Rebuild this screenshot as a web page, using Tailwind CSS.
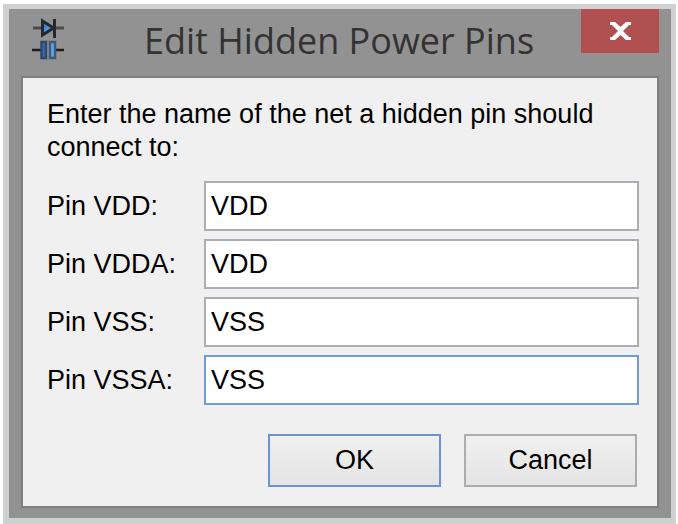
<!DOCTYPE html>
<html lang="en">
<head>
  <meta charset="UTF-8" />
  <meta name="viewport" content="width=device-width, initial-scale=1.0"/>
  <title>Edit Hidden Power Pins</title>
  <script src="https://cdn.jsdelivr.net/npm/@tailwindcss/browser@4"></script>
</head>
<body class="bg-white text-black font-['Liberation_Sans',Arial,sans-serif]">

  <main class="min-h-screen pt-1 pl-[3px] pr-[2px] flex">
    <div role="dialog" aria-labelledby="dialog-title" class="flex-1 flex flex-col bg-[#929292] border-[5px] border-l-[6px] border-b-[6px] border-[#cfd1d0]">

      <!-- Title bar -->
      <header class="h-[67px] pl-[22px] pr-3 flex items-start">
        <svg class="w-[34px] h-[42px] mt-[9px] shrink-0" viewBox="0 0 34 42" aria-hidden="true">
          <defs>
            <linearGradient id="blue" x1="0" y1="0" x2="1" y2="1">
              <stop offset="0" stop-color="#2a5fae"/>
              <stop offset="0.500" stop-color="#5596e6"/>
              <stop offset="1" stop-color="#3a78c6"/>
            </linearGradient>
          </defs>
          <!-- diode -->
          <path d="M2 10h9M24 10h9" stroke="#4c4c4c" stroke-width="3"/>
          <path d="M11.500 3v14l11-7z" fill="url(#blue)" stroke="#1f2833" stroke-width="3"/>
          <path d="M23.500 1v19" stroke="#26292d" stroke-width="3"/>
          <!-- capacitor -->
          <path d="M1 32h9M25 32h8" stroke="#1e1e1e" stroke-width="2.500"/>
          <path d="M10.500 24h4.500v16h-4.500z" fill="#2b6cc0" stroke="#304a66" stroke-width="2.500"/>
          <path d="M19 24h5v16h-5z" fill="#62aaf0" stroke="#3f5a76" stroke-width="2.500"/>
        </svg>
        <h1 id="dialog-title" class="flex-1 pt-2 pl-8 text-center text-[36px] leading-12 text-[#333] whitespace-nowrap font-['Open_Sans',sans-serif]">Edit Hidden Power Pins</h1>
        <button type="button" aria-label="Close" class="w-[78px] h-11 shrink-0 flex items-center justify-center bg-[#b05050]">
          <svg class="w-[21px] h-[18px]" viewBox="0 0 21 18" aria-hidden="true">
            <path d="M0 0h5l5.500 5 5.500-5h5v3h-2l-6 6 6 6h2v3h-5l-5.500-5-5.500 5h-5v-3h2l6-6-6-6h-2z" fill="#fff"/>
          </svg>
        </button>
      </header>

      <!-- Net names -->
      <form class="flex-1 mx-3 mb-[10px] border-2 border-[#7f7f7f] bg-[#f0f0f0] pl-6 pr-[18px] pt-5 text-[27px]">
        <p class="leading-[33px]">Enter the name of the net a hidden pin should connect to:</p>

        <div class="mt-[17px] grid grid-cols-[157px_1fr] gap-y-2 items-center">
          <label for="pin-vdd">Pin VDD:</label>
          <input id="pin-vdd" type="text" value="VDD" class="w-full h-[50px] px-[5px] bg-white border-2 border-[#abadb3] outline-none"/>
          <label for="pin-vdda">Pin VDDA:</label>
          <input id="pin-vdda" type="text" value="VDD" class="w-full h-[50px] px-[5px] bg-white border-2 border-[#abadb3] outline-none"/>
          <label for="pin-vss">Pin VSS:</label>
          <input id="pin-vss" type="text" value="VSS" class="w-full h-[50px] px-[5px] bg-white border-2 border-[#abadb3] outline-none"/>
          <label for="pin-vssa">Pin VSSA:</label>
          <input id="pin-vssa" type="text" value="VSS" class="w-full h-[50px] px-[5px] bg-white border-2 border-[#6f9bd8] outline-none"/>
        </div>

        <div class="mt-[29px] mb-4 pr-[2px] flex justify-end gap-[23px]">
          <button type="submit" class="w-[173px] h-[53px] bg-linear-to-b from-[#f0f0f0] to-[#e4e4e4] border-2 border-[#6a94d6]">OK</button>
          <button type="button" class="w-[173px] h-[53px] bg-linear-to-b from-[#f0f0f0] to-[#e4e4e4] border-2 border-[#acacac]">Cancel</button>
        </div>
      </form>
    </div>
  </main>

</body>
</html>
